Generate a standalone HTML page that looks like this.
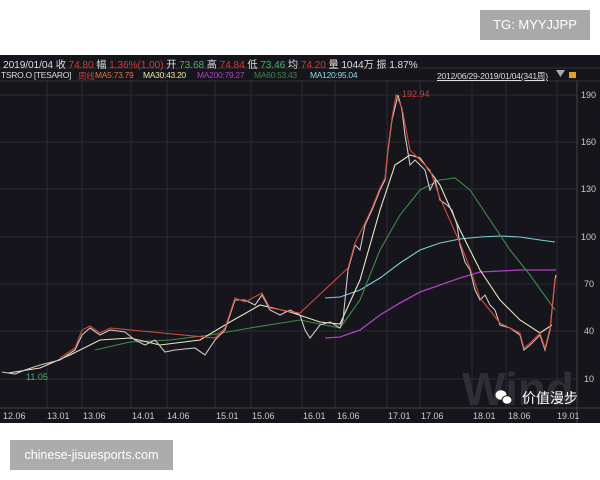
<!DOCTYPE html>
<html><head><meta charset="utf-8"><style>
body{margin:0;width:600px;height:480px;background:#fff;position:relative;overflow:hidden;font-family:"Liberation Sans","Noto Sans CJK SC",sans-serif}
.tg{position:absolute;left:480px;top:10px;width:110px;height:30px;background:#a9a9a9;color:#fff;font-size:13px;line-height:30px;text-align:center}
.site{position:absolute;left:10px;top:440px;width:163px;height:30px;background:#acacac;color:#fff;font-size:12.5px;line-height:30px;text-align:center}
.chart{position:absolute;left:0;top:55px;width:600px;height:368px;background:#15151b}
.h1{position:absolute;left:3px;top:1px;font-size:10.2px;color:#ddd;white-space:nowrap;letter-spacing:-0.1px}
.h2{position:absolute;left:1px;top:15px;font-size:8.5px;color:#ddd;white-space:nowrap;letter-spacing:-0.3px}
.h2 span{position:absolute;top:0}
.r{color:#d03a3a}.g{color:#4caf6a}
</style></head><body>
<div class="tg">TG: MYYJJPP</div>
<div class="chart">
<svg width="600" height="368" style="position:absolute;left:0;top:0">
<line x1="0" y1="13" x2="600" y2="13" stroke="#333" stroke-width="1"/>
<line x1="0" y1="26" x2="600" y2="26" stroke="#333" stroke-width="1"/>
<g stroke="#2c2c36" stroke-width="1">
<line x1="47" y1="26" x2="47" y2="353"/><line x1="82" y1="26" x2="82" y2="353"/><line x1="131" y1="26" x2="131" y2="353"/><line x1="167" y1="26" x2="167" y2="353"/><line x1="215" y1="26" x2="215" y2="353"/><line x1="251" y1="26" x2="251" y2="353"/><line x1="302" y1="26" x2="302" y2="353"/><line x1="335" y1="26" x2="335" y2="353"/><line x1="387" y1="26" x2="387" y2="353"/><line x1="420" y1="26" x2="420" y2="353"/><line x1="472" y1="26" x2="472" y2="353"/><line x1="506" y1="26" x2="506" y2="353"/><line x1="557" y1="26" x2="557" y2="353"/>
<line x1="0" y1="40" x2="577" y2="40"/><line x1="0" y1="87" x2="577" y2="87"/><line x1="0" y1="134" x2="577" y2="134"/><line x1="0" y1="182" x2="577" y2="182"/><line x1="0" y1="229" x2="577" y2="229"/><line x1="0" y1="276" x2="577" y2="276"/><line x1="0" y1="324" x2="577" y2="324"/>
</g>
<line x1="577" y1="26" x2="577" y2="368" stroke="#444"/>
<line x1="0" y1="353" x2="600" y2="353" stroke="#444"/>
<text x="462" y="350" font-size="46" font-weight="bold" fill="#2e2e36">Wind</text>
<g fill="#ccc" font-size="9">
<text x="581" y="43">190</text><text x="581" y="90">160</text><text x="581" y="137">130</text><text x="581" y="185">100</text><text x="584" y="232">70</text><text x="584" y="279">40</text><text x="584" y="327">10</text>
<text x="3" y="364">12.06</text><text x="47" y="364">13.01</text><text x="83" y="364">13.06</text><text x="132" y="364">14.01</text><text x="167" y="364">14.06</text><text x="216" y="364">15.01</text><text x="252" y="364">15.06</text><text x="303" y="364">16.01</text><text x="337" y="364">16.06</text><text x="388" y="364">17.01</text><text x="421" y="364">17.06</text><text x="473" y="364">18.01</text><text x="508" y="364">18.06</text><text x="557" y="364">19.01</text>
</g>
<g transform="translate(0,-55)" fill="none" stroke-width="1.1">
<polyline stroke="#7ad0d8" points="325,298 340,297 360,290 380,278 400,263 420,250 440,243 460,239 480,237 500,236 520,237 540,240 555,242"/>
<polyline stroke="#b040c0" stroke-width="1.3" points="325,338 340,337 360,330 380,315 400,303 420,292 440,285 460,278 480,272 500,271 520,270 556,270"/>
<polyline stroke="#3f8a4a" points="95,350 130,342 170,340 210,335 250,328 300,320 340,328 360,300 380,250 400,215 420,190 440,180 455,178 470,190 490,220 510,250 530,275 555,310"/>
<polyline stroke="#e8e6c0" points="8,373 40,368 70,355 100,340 130,338 160,345 200,340 230,322 260,305 290,312 320,322 340,324 360,280 380,210 395,165 410,155 420,158 440,185 460,230 480,270 500,300 520,320 540,333 552,325"/>
<polyline stroke="#c9c9c9" points="2,372 15,374 25,370 40,365 60,360 75,350 82,335 90,328 100,335 110,330 125,332 135,340 145,345 155,340 165,352 175,350 195,348 205,355 215,340 225,330 235,300 245,300 255,305 262,295 270,310 280,315 290,310 300,315 305,330 310,338 320,325 330,322 340,328 343,320 348,270 355,245 360,250 365,225 372,210 380,190 385,180 388,150 392,120 398,95 402,110 405,135 410,165 415,160 420,165 425,170 430,190 435,180 440,200 447,205 452,210 457,225 460,245 465,262 470,270 475,290 480,300 485,295 490,305 495,310 500,325 510,328 520,335 524,350 530,345 540,335 545,350 550,330 555,280 556,275"/>
<polyline stroke="#d24a3a" points="60,358 75,348 82,330 90,326 100,333 110,328 215,338 225,328 235,298 245,302 262,293 270,308 300,313 348,268 355,243 365,223 372,208 380,188 385,178 388,148 392,118 396,95 402,108 410,150 430,170 440,198 460,243 470,268 480,298 500,323 520,333 524,348 530,343 540,333 545,348 550,328 555,278"/>
</g>
<text x="26" y="325" font-size="9" fill="#4caf6a">11.05</text>
<text x="402" y="42" font-size="9" fill="#d03a3a">192.94</text>
<g transform="translate(496,335)">
<ellipse cx="5" cy="5" rx="5.5" ry="4.8" fill="#fff"/><ellipse cx="11" cy="10" rx="5" ry="4.3" fill="#fff" stroke="#15151b"/>
</g>
<text x="522" y="348" font-size="14" fill="#fff" font-family="Liberation Sans,Noto Sans CJK SC,sans-serif">价值漫步</text>
<polygon points="556,15 565,15 560.5,22" fill="#aaa"/>
<rect x="569" y="17" width="7" height="6" fill="#d9a520"/>
</svg>
<div class="h1">2019/01/04 收 <span class="r">74.80</span> 幅 <span class="r">1.36%(1.00)</span> 开 <span class="g">73.68</span> 高 <span class="r">74.84</span> 低 <span class="g">73.46</span> 均 <span class="r">74.20</span> 量 1044万 振 1.87%</div>
<div class="h2"><span style="left:0">TSRO.O [TESARO]</span><span class="r" style="left:77px">周线</span><span style="left:94px;color:#e07050">MA5:73.79</span><span style="left:142px;color:#e8e6a0">MA30:43.20</span><span style="left:196px;color:#b040c0">MA200:79.27</span><span style="left:253px;color:#3f8a4a">MA60:53.43</span><span style="left:309px;color:#8ad8e0">MA120:95.04</span></div>
<div style="position:absolute;left:437px;top:15px;font-size:8.5px;color:#ddd;text-decoration:underline;white-space:nowrap;letter-spacing:-0.2px">2012/06/29-2019/01/04(341周)</div>
</div>
<div class="site">chinese-jisuesports.com</div>
</body></html>
